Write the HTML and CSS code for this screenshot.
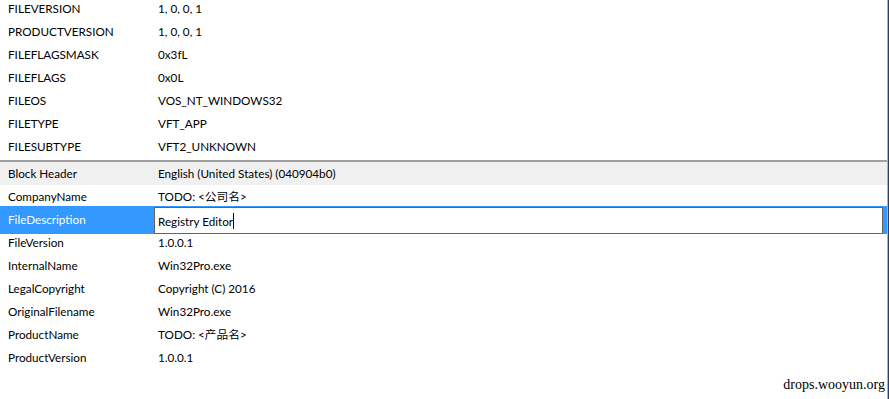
FILE: index.html
```html
<!DOCTYPE html>
<html>
<head>
<meta charset="utf-8">
<link rel="stylesheet" href="styles.css">
</head>
<body>
<div class="window">
  <div class="list">
    <div class="row"><span class="key">FILEVERSION</span><span class="val">1, 0, 0, 1</span></div>
    <div class="row"><span class="key">PRODUCTVERSION</span><span class="val">1, 0, 0, 1</span></div>
    <div class="row"><span class="key">FILEFLAGSMASK</span><span class="val">0x3fL</span></div>
    <div class="row"><span class="key">FILEFLAGS</span><span class="val">0x0L</span></div>
    <div class="row"><span class="key">FILEOS</span><span class="val">VOS_NT_WINDOWS32</span></div>
    <div class="row"><span class="key">FILETYPE</span><span class="val">VFT_APP</span></div>
    <div class="row"><span class="key">FILESUBTYPE</span><span class="val">VFT2_UNKNOWN</span></div>
    <div class="sep"></div>
    <div class="row header"><span class="key">Block Header</span><span class="val">English (United States) (040904b0)</span></div>
    <div class="row"><span class="key">CompanyName</span><span class="val">TODO: &lt;公司名&gt;</span></div>
    <div class="row selected"><span class="key">FileDescription</span><span class="edit">Registry Editor<span class="caret"></span></span></div>
    <div class="row"><span class="key">FileVersion</span><span class="val">1.0.0.1</span></div>
    <div class="row"><span class="key">InternalName</span><span class="val">Win32Pro.exe</span></div>
    <div class="row"><span class="key">LegalCopyright</span><span class="val">Copyright (C) 2016</span></div>
    <div class="row"><span class="key">OriginalFilename</span><span class="val">Win32Pro.exe</span></div>
    <div class="row"><span class="key">ProductName</span><span class="val">TODO: &lt;产品名&gt;</span></div>
    <div class="row"><span class="key">ProductVersion</span><span class="val">1.0.0.1</span></div>
  </div>
  <div class="edge"></div>
  <div class="watermark">drops.wooyun.org</div>
</div>
</body>
</html>
```
FILE: styles.css
```css
html, body {
  margin: 0;
  padding: 0;
  background: #ffffff;
}
.window {
  position: relative;
  width: 889px;
  height: 399px;
  display: flex;
  overflow: hidden;
  font-family: "Lato", "Noto Sans CJK SC", sans-serif;
  font-size: 11.7px;
  color: #000;
}
.list {
  width: 887px;
  margin-top: -3px;
  display: flex;
  flex-direction: column;
}
.row {
  height: 23px;
  line-height: 22px;
  display: flex;
  white-space: nowrap;
}
.key {
  width: 150px;
  padding-left: 8px;
}
.val {
  flex: 1;
}
.sep {
  height: 2px;
  margin-top: 2px;
  background: #a0a0a0;
}
.header {
  background: #f0f0f0;
}
.selected {
  height: 28px;
  margin: -2px 0 -3px;
  background: #3399ff;
  line-height: 27px;
  position: relative;
}
.selected .key {
  color: #ffffff;
}
.edit {
  flex: 1;
  margin: 1px 4px 0 -4px;
  height: 25px;
  line-height: 22px;
  border: 1px solid #646464;
  background: #ffffff;
  padding-left: 3px;
  display: flex;
  align-items: center;
}
.caret {
  display: inline-block;
  width: 1px;
  height: 16px;
  background: #000;
}
.edge {
  width: 2px;
  background: linear-gradient(to right, #a9b3c4 0 1px, #2c3d61 1px 2px);
}
.watermark {
  position: absolute;
  right: 4px;
  bottom: 6px;
  font-family: "Liberation Serif", serif;
  font-size: 14px;
  color: #000;
}
```
